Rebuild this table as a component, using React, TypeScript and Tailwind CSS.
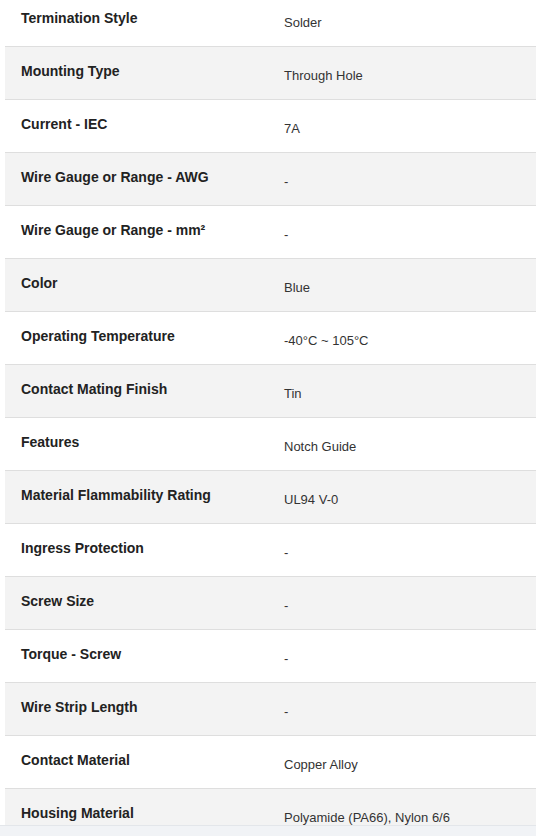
const specs: [string, string][] = [
  ['Termination Style', 'Solder'],
  ['Mounting Type', 'Through Hole'],
  ['Current - IEC', '7A'],
  ['Wire Gauge or Range - AWG', '-'],
  ['Wire Gauge or Range - mm²', '-'],
  ['Color', 'Blue'],
  ['Operating Temperature', '-40°C ~ 105°C'],
  ['Contact Mating Finish', 'Tin'],
  ['Features', 'Notch Guide'],
  ['Material Flammability Rating', 'UL94 V-0'],
  ['Ingress Protection', '-'],
  ['Screw Size', '-'],
  ['Torque - Screw', '-'],
  ['Wire Strip Length', '-'],
  ['Contact Material', 'Copper Alloy'],
  ['Housing Material', 'Polyamide (PA66), Nylon 6/6'],
];

export default function App() {
  return (
    <div className="h-[836px] overflow-hidden bg-white" style={{ fontFamily: '"Liberation Sans", Arial, sans-serif' }}>
      <div className="mt-[-6px] pl-[5px]">
        {specs.map(([label, value], i) => (
          <div
            key={label}
            className={`flex h-[53px] border-b border-[#dedede] ${i % 2 === 1 ? 'bg-[#f3f3f3]' : 'bg-white'}`}
          >
            <div className="w-[279px] shrink-0 pl-4 pt-[14px] text-[14px] leading-[20px] font-bold text-[#222]">
              {label}
            </div>
            <div className="pt-[19px] text-[13px] leading-[20px] text-[#333]">{value}</div>
          </div>
        ))}
      </div>
      <div className="fixed bottom-0 left-0 right-0 h-[11px] border-t border-[#e3e6ea] bg-[#f1f3f6]" />
    </div>
  );
}
